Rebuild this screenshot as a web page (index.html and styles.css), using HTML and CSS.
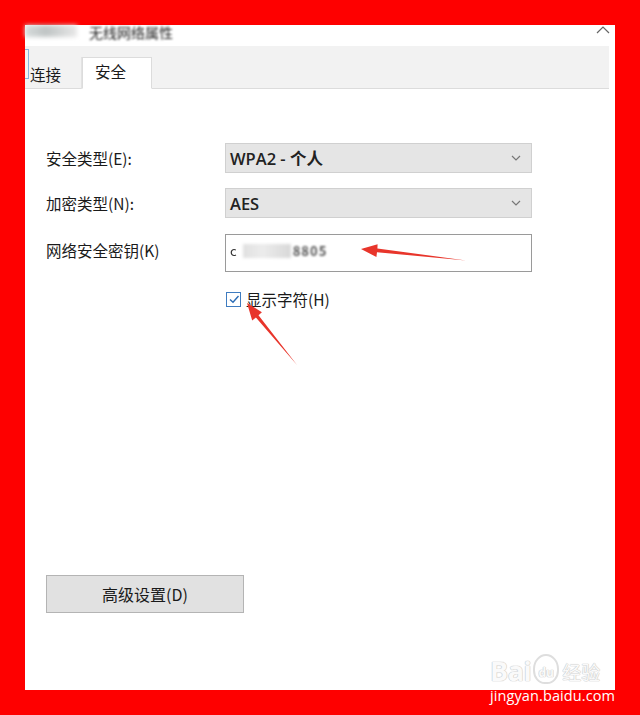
FILE: index.html
```html
<!DOCTYPE html>
<html lang="zh-CN">
<head>
<meta charset="utf-8">
<title>无线网络属性</title>
<link rel="stylesheet" href="styles.css">
</head>
<body>
<div class="window">
  <div class="titlebar">
    <span class="title-blur">▆▆ ·</span>
    <span class="title-text">无线网络属性</span>
    <svg class="close" width="14" height="9" viewBox="0 0 14 9"><path d="M1 8 L7 2 L13 8" fill="none" stroke="#666" stroke-width="1.2"/></svg>
  </div>
  <div class="tabstrip">
    <div class="tab tab-left"><span class="tab-icon"></span>连接</div>
    <div class="tab tab-active">安全</div>
  </div>
  <div class="content">
    <div class="form">
      <label class="label">安全类型(E):</label>
      <div class="select"><span>WPA2 - 个人</span><svg class="chev" width="10" height="6" viewBox="0 0 10 6"><path d="M1 1 L5 5 L9 1" fill="none" stroke="#777" stroke-width="1.2"/></svg></div>
      <label class="label">加密类型(N):</label>
      <div class="select"><span>AES</span><svg class="chev" width="10" height="6" viewBox="0 0 10 6"><path d="M1 1 L5 5 L9 1" fill="none" stroke="#777" stroke-width="1.2"/></svg></div>
      <label class="label label-key">网络安全密钥(K)</label>
      <div class="input"><span class="pw-a">c</span><span class="pw-blur"></span><span class="pw-b">8805</span></div>
      <span></span>
      <div class="check-row"><span class="checkbox"><svg width="12" height="12" viewBox="0 0 12 12"><path d="M2 6.5 L5 9.2 L10.5 3" fill="none" stroke="#2a6bb5" stroke-width="1.4"/></svg></span><span>显示字符(H)</span></div>
    </div>
    <button class="btn">高级设置(D)</button>
  </div>
</div>
<svg class="arrows" width="640" height="715" viewBox="0 0 640 715">
  <polygon points="361,249 377.6,244.2 377.4,248.4 466,260.5 377.0,252.2 376.4,257" fill="#e8352b"/>
  <polygon points="247,303 261.9,312.2 258.5,315.3 297,365 255.9,317.6 252.2,320.6" fill="#e8352b"/>
</svg>
<div class="watermark">
  <div class="wm-logo"><span class="wm-bai">Bai</span><span class="wm-paw"><span class="wm-du">du</span></span><span class="wm-jy">经验</span></div>
  <div class="wm-url">jingyan.baidu.com</div>
</div>
</body>
</html>
```
FILE: styles.css
```css
* { box-sizing: border-box; }
html, body { margin: 0; padding: 0; }
body {
  width: 640px;
  height: 715px;
  background: #fe0000;
  padding: 25px 25px 25px 25px;
  font-family: "Noto Sans CJK SC", "Open Sans", sans-serif;
  color: #1a1a1a;
  overflow: hidden;
}
.window {
  width: 590px;
  height: 665px;
  background: #ffffff;
  display: flex;
  flex-direction: column;
}
.titlebar {
  height: 21px;
  display: flex;
  align-items: flex-start;
  position: relative;
  font-size: 13px;
  color: #555;
}
.title-blur {
  width: 52px;
  height: 12px;
  margin-top: 0;
  background: linear-gradient(90deg, #d7dcdc, #bfc4c4 40%, #e8e8e8);
  filter: blur(2px);
  color: transparent;
}
.title-text {
  margin-left: 12px;
  margin-top: 0;
  filter: blur(1.1px);
  color: #222;
  font-size: 14px;
  line-height: 14px;
}
.close {
  position: absolute;
  right: 5px;
  top: 0;
}
.tabstrip {
  height: 43px;
  margin-right: 6px;
  background: #f2f2f2;
  border-bottom: 1px solid #dcdcdc;
  display: flex;
  align-items: flex-end;
}
.tab {
  height: 32px;
  font-size: 15.5px;
  display: flex;
  align-items: center;
  margin-bottom: -1px;
}
.tab-left {
  width: 57px;
  padding-left: 5px;
  padding-top: 2px;
  border-right: 1px solid #e2e2e2;
  position: relative;
}
.tab-icon {
  position: absolute;
  left: 0;
  top: -8px;
  width: 4px;
  height: 30px;
  border: 1px solid #5b9bd5;
  border-left: none;
  opacity: 0.7;
}
.tab-active {
  width: 70px;
  background: #fff;
  border: 1px solid #dcdcdc;
  border-bottom: 1px solid #fff;
  padding-left: 12px;
  padding-bottom: 4px;
}
.content {
  flex: 1;
  display: flex;
  flex-direction: column;
  padding: 54px 0 77px 21px;
}
.form {
  display: grid;
  grid-template-columns: 179px 307px;
  row-gap: 15px;
  align-items: center;
}
.label {
  font-size: 15.5px;
  color: #1a1a1a;
}
.label-key { margin-top: -6px; }
.select {
  height: 30px;
  background: #e5e5e5;
  border: 1px solid #d0d0d0;
  display: flex;
  align-items: center;
  justify-content: space-between;
  padding: 0 10px 0 4px;
  font-size: 16.5px;
  font-family: "Open Sans", "Noto Sans CJK SC", sans-serif;
  font-weight: 600;
  color: #222;
}
.chev { flex: none; }
.input {
  height: 38px;
  margin-top: 1px;
  border: 1px solid #9a9a9a;
  background: #fff;
  display: flex;
  align-items: center;
  padding-left: 4px;
  padding-bottom: 5px;
  font-size: 13px;
  color: #333;
}
.pw-a { filter: blur(0.6px); }
.pw-blur {
  width: 48px;
  height: 14px;
  margin-left: 6px;
  background: linear-gradient(90deg, #e0e0e0, #ececec 40%, #d8d8d8);
  filter: blur(1.5px);
}
.pw-b {
  margin-left: 2px;
  filter: blur(1px);
  font-weight: 700;
  letter-spacing: 1px;
  color: #555;
}
.check-row {
  display: flex;
  align-items: center;
  gap: 5px;
  font-size: 15.5px;
  margin-top: 1px;
}
.checkbox {
  width: 15px;
  height: 15px;
  border: 1px solid #3f7cc0;
  background: #fff;
  display: flex;
  align-items: center;
  justify-content: center;
  margin-left: 1px;
}
.btn {
  margin-top: auto;
  width: 198px;
  height: 38px;
  background: #e1e1e1;
  border: 1px solid #b4b4b4;
  font-family: "Noto Sans CJK SC", sans-serif;
  font-size: 16px;
  color: #1a1a1a;
  padding: 0;
}
.arrows {
  position: absolute;
  left: 0;
  top: 0;
  pointer-events: none;
}
.watermark {
  position: absolute;
  left: 490px;
  top: 640px;
  width: 125px;
  font-family: "Open Sans", "Noto Sans CJK SC", sans-serif;
}
.wm-logo {
  display: flex;
  align-items: flex-end;
  height: 44px;
  color: #fafafa;
  text-shadow: 0 0 1px #c8c8c8, 0 0 1px #c8c8c8, 0 0 1px #c8c8c8;
}
.wm-bai { font-size: 27px; font-weight: 700; line-height: 26px; letter-spacing: -0.5px; }
.wm-paw {
  width: 26px;
  height: 30px;
  margin: 0 3px 0 2px;
  border: 2px solid #dedede;
  border-radius: 50% 50% 45% 45%;
  display: flex;
  align-items: flex-end;
  justify-content: center;
  padding-bottom: 3px;
}
.wm-du { font-size: 12px; font-weight: 700; line-height: 12px; }
.wm-jy { font-size: 19px; line-height: 24px; font-family: "Noto Sans CJK SC", sans-serif; }
.wm-url {
  margin-top: 4px;
  color: #fff;
  font-size: 14.5px;
  line-height: 16px;
  letter-spacing: 0.1px;
}
```
